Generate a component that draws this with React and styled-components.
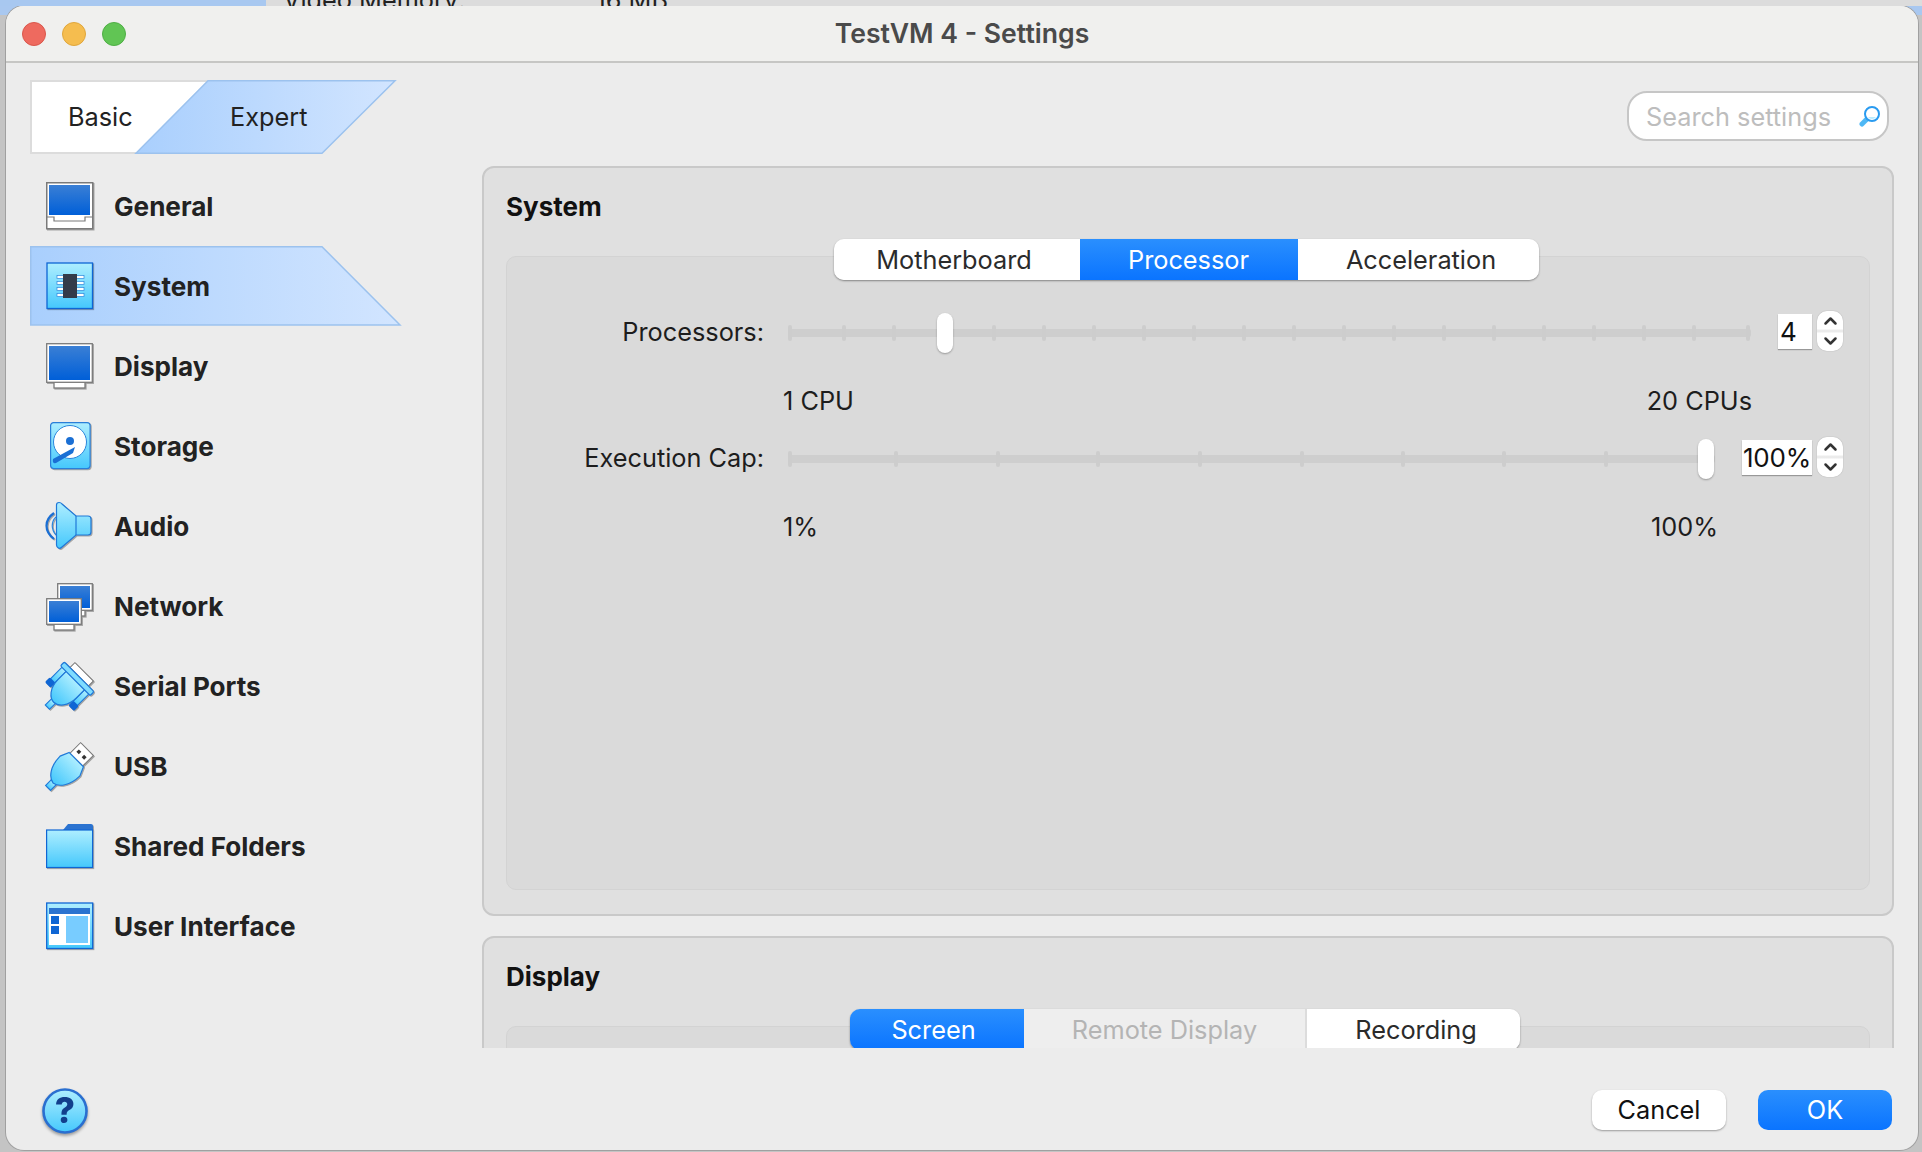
import React from "react";
import styled, { createGlobalStyle } from "styled-components";
import { ChevronUp, ChevronDown } from "lucide-react";

const Global = createGlobalStyle`
  html, body { margin: 0; padding: 0; height: 1152px; overflow: hidden; }
  body { font-family: Inter, "Noto Sans", "Liberation Sans", sans-serif; background: #cfcfcf; }
  * { box-sizing: border-box; }
`;

const Page = styled.div`
  width: 1922px; height: 1152px; overflow: hidden;
  background: linear-gradient(#a9c8f0 0 15px, #c4c4c4 15px);
`;
const Behind = styled.div`
  height: 6px; display: flex; overflow: hidden; margin-left: 0;
`;
const BehindBlue = styled.div`
  width: 266px; background: #a8c8f0;
`;
const BehindSheet = styled.div`
  flex: 1; background: #dcdcdc; display: flex; padding-left: 17px; gap: 130px;
  font-size: 25.3px; line-height: 0; color: #222; white-space: nowrap;
`;
const Win = styled.div`
  width: 1912px; height: 1144px; margin-left: 6px;
  background: #ececec; border-radius: 18px;
  box-shadow: 0 0 0 1px #a0a0a0;
  overflow: hidden; display: flex; flex-direction: column;
`;
const TitleBar = styled.header`
  height: 57px; flex: none; background: #f0f0ee; border-bottom: 2px solid #c6c6c4;
  display: grid; grid-template-columns: 1fr auto 1fr; align-items: center; padding: 0 16px 2px;
`;
const Lights = styled.div` display: flex; gap: 16px; padding-top: 2px; `;
const Light = styled.span`
  width: 24px; height: 24px; border-radius: 50%;
  background: ${p => p.$c}; border: 1px solid ${p => p.$b};
`;
const Title = styled.h1`
  margin: 0; font-size: 26.6px; font-weight: 600; color: #4a4a4a;
`;
const Content = styled.div`
  height: 985px; flex: none; display: flex;
`;
const Side = styled.nav`
  width: 476px; flex: none; padding: 17px 0 0 24px;
`;
const ModeSwitch = styled.div`
  position: relative; width: 366px; height: 74px; display: flex; align-items: center; padding-bottom: 2px;
  font-size: 25.3px; color: #222;
`;
const ShapeBack = styled.svg`
  position: absolute; left: 0; top: 0; overflow: visible;
`;
const ModeLabel = styled.span`
  position: relative; width: ${p => p.$w}px; padding-left: ${p => p.$pad}px;
`;
const NavList = styled.ul`
  list-style: none; margin: 12px 0 0; padding: 0; width: 372px;
`;
const NavRow = styled.li`
  position: relative; height: 80px; display: flex; align-items: center; gap: 20px;
  padding-left: 16px; font-size: 26.1px; font-weight: 700; color: #222;
`;
const IconSvg = styled.svg`
  position: relative; flex: none; width: 48px; height: 48px;
  filter: drop-shadow(1px 1px 0.5px rgba(0,0,0,.3));
  overflow: visible;
`;
const NavText = styled.span` position: relative; `;

const Main = styled.main`
  width: 1412px; flex: none; display: flex; flex-direction: column; padding-top: 28px;
`;
const Search = styled.div`
  align-self: flex-end; margin-right: 5px; width: 262px; height: 50px; flex: none;
  border: 2px solid #c6c6c6; border-radius: 20px; background: #fff;
  display: flex; align-items: center; justify-content: space-between; padding: 0 6px 0 17px;
  font-size: 25.3px; color: #bdbdbd;
`;
const Scroll = styled.div`
  margin-top: 25px; flex: 1; min-height: 0; overflow: hidden;
  display: flex; flex-direction: column; gap: 20px;
`;
const Panel = styled.section`
  flex: none; height: ${p => p.$h}px; background: #e0e0e0; border: 2px solid #c9c9c9; border-radius: 12px;
  padding: 24px 22px 24px 22px; display: flex; flex-direction: column;
`;
const PanelTitle = styled.h2`
  margin: 0; height: 30px; line-height: 30px; font-size: 26px; font-weight: 700; color: #111;
`;
const Inner = styled.div`
  margin-top: ${p => p.$top}px; flex: 1; background: #dadada; border: 1px solid #d3d3d3; border-radius: 10px;
  display: flex; flex-direction: column;
`;
const Tabs = styled.div`
  align-self: center; display: flex; margin-top: -18px; margin-left: ${p => p.$shift || 0}px; height: 41px; flex: none;
  border-radius: 10px; overflow: hidden; box-shadow: 0 1px 2px rgba(0,0,0,.4);
`;
const Tab = styled.div`
  width: ${p => p.$w}px; display: flex; align-items: center; justify-content: center;
  font-size: 25.3px;
  padding-left: ${p => p.$pl || 0}px; padding-right: ${p => p.$pr || 0}px;
  background: ${p => p.$on ? "linear-gradient(#2a8ffe,#0a74ff)" : p.$off ? "#eeeeee" : "#fff"};
  color: ${p => p.$on ? "#fff" : p.$off ? "#b4b4b4" : "#2b2b2b"};
  border-right: ${p => p.$off ? "2px solid #dcdcdc" : "none"};
`;
const Form = styled.div`
  padding: 31px 26px 0 0; display: flex; flex-direction: column;
`;
const SliderRow = styled.div`
  display: grid; grid-template-columns: 257px 1fr auto; column-gap: 19px; align-items: center; height: 44px;
  margin-top: ${p => p.$top || 0}px;
`;
const RowLabel = styled.label`
  text-align: right; font-size: 25.3px; color: #1d1d1d; margin-bottom: 4px;
`;
const Slider = styled.div`
  position: relative; height: 40px; display: flex; align-items: center; padding: 0 5px; margin-right: 3px;
`;
const Track = styled.div`
  flex: 1; height: 8px; background: #cecece; border-radius: 2px;
`;
const Tick = styled.span`
  position: absolute; top: 12px; width: 4px; height: 16px; border-radius: 2px; background: #cdcdcd;
`;
const Thumb = styled.span`
  position: absolute; top: 0; width: 16px; height: 40px; border-radius: 8px; background: #fff;
  box-shadow: 0 1px 2px rgba(0,0,0,.3);
`;
const Spin = styled.div`
  display: flex; align-items: center; gap: 5px; margin-bottom: 4px;
`;
const SpinValue = styled.div`
  width: ${p => p.$w}px; height: 35px; background: #fff; box-shadow: 0 1px 1px rgba(0,0,0,.3);
  font-size: 26px; color: #111; display: flex; align-items: center; justify-content: ${p => p.$w > 50 ? "center" : "flex-start"};
  padding-left: ${p => p.$w > 50 ? 0 : 2}px; letter-spacing: ${p => p.$w > 50 ? "-0.2px" : 0};
`;
const Stepper = styled.div`
  width: 26px; height: 40px; border-radius: 10px; color: #333;
  background: linear-gradient(#fff 0 44%, #e6e6e6 50%, #fff 56%);
  box-shadow: 0 0 1px rgba(0,0,0,.4);
  display: flex; flex-direction: column; align-items: center; justify-content: center;
`;
const Hints = styled.div`
  margin-top: ${p => p.$top}px; height: 30px; line-height: 30px; font-size: 25.3px; color: #1d1d1d;
  display: flex; justify-content: space-between;
  padding-left: 276px; padding-right: ${p => p.$right}px;
`;
const Footer = styled.footer`
  flex: 1; min-height: 0; display: flex; align-items: center; justify-content: space-between;
  padding: 37px 26px 15px 35px;
`;
const HelpIcon = styled.svg`
  width: 48px; height: 48px; margin-top: 2px; flex: none; overflow: visible;
  filter: drop-shadow(0 2px 1.5px rgba(0,0,0,.35));
`;
const Buttons = styled.div` display: flex; gap: 32px; `;
const Btn = styled.button`
  width: 134px; height: 40px; border: 0; border-radius: 10px; padding: 0 0 2px;
  font-family: inherit; font-size: 25.3px;
  background: ${p => p.$primary ? "linear-gradient(#2a8ffe,#0a74ff)" : "#fff"};
  color: ${p => p.$primary ? "#fff" : "#111"};
  box-shadow: ${p => p.$primary ? "none" : "0 1px 2px rgba(0,0,0,.35)"};
`;

const Grad = ({ id }) => (
  <defs>
    <linearGradient id={id} x1="0" y1="0" x2="0" y2="1">
      <stop offset="0" stopColor="#aeeeff" />
      <stop offset="1" stopColor="#45c8fc" />
    </linearGradient>
    <linearGradient id={id + "d"} x1="0" y1="0" x2="0" y2="1">
      <stop offset="0" stopColor="#3a7fd5" />
      <stop offset="1" stopColor="#005fd8" />
    </linearGradient>
  </defs>
);

const Ic = ({ id, children }) => (
  <IconSvg viewBox="0 0 48 48">
    <Grad id={id} />
    {children}
  </IconSvg>
);

const GeneralIcon = () => (
  <Ic id="g1">
    <rect x=".75" y=".75" width="46" height="46" fill="#fff" stroke="#7a7a7a" strokeWidth="1.5" />
    <rect x="3" y="3" width="41" height="30" fill="url(#g1d)" />
    <path d="M1 35H8V39H39V35H47" fill="none" stroke="#7a7a7a" strokeWidth="1.2" />
  </Ic>
);
const SystemIcon = () => (
  <Ic id="g2">
    <rect x="1" y="1" width="45.5" height="45.5" fill="url(#g2)" stroke="#0f66d4" strokeWidth="1.3" />
    {[15, 21, 27, 33].map(y => (
      <rect key={y} x="11" y={y - 1.5} width="27" height="3" fill="#fff" stroke="#2c86dc" strokeWidth=".7" />
    ))}
    <rect x="17" y="12" width="14" height="24" fill="#333b4a" />
  </Ic>
);
const Monitor = ({ x, y, w, h, fill }) => (
  <>
    <rect x={x + 8} y={y + h - 2} width={w - 16} height="7" fill="#fff" stroke="#7a7a7a" strokeWidth="1.3" />
    <rect x={x + .7} y={y + .7} width={w - 1.4} height={h - 1.4} fill="#fff" stroke="#7a7a7a" strokeWidth="1.3" />
    <rect x={x + 3} y={y + 3} width={w - 6} height={h - 6} fill={fill} />
  </>
);
const DisplayIcon = () => (
  <Ic id="g3"><Monitor x={0} y={1} w={47} h={40} fill="url(#g3d)" /></Ic>
);
const StorageIcon = () => (
  <Ic id="g4">
    <rect x="4.6" y=".6" width="39.5" height="46" rx="3" fill="url(#g4)" stroke="#2a7fd8" strokeWidth="1.2" />
    <circle cx="24" cy="20" r="16.5" fill="#fff" stroke="#2a86dc" strokeWidth="1" />
    <circle cx="24" cy="19" r="4" fill="#1a6fd4" />
    <path d="M29 25L27 31L10 41Q6 42 7 37Z" fill="#1a6fd4" />
  </Ic>
);
const AudioIcon = () => (
  <Ic id="g5">
    <path d="M8 11C-2 18-2 29 8 37" fill="none" stroke="#1a6fd4" strokeWidth="2.2" />
    <path d="M10 15C5 20 5 27 10 33" fill="none" stroke="#2a86dc" strokeWidth="1.2" />
    <path d="M10.5 3Q10.5 .5 13 .5Q15 .5 16 2L30 14H42Q45 14 45 17V30Q45 33 42 33H30L16 45Q14 47 12.5 46Q10.5 45 10.5 43Z"
      fill="url(#g5)" stroke="#1f78d8" strokeWidth="1.2" />
    <path d="M30 14V33" stroke="#1f78d8" strokeWidth="1.2" />
  </Ic>
);
const NetworkIcon = () => (
  <Ic id="g6">
    <Monitor x={11} y={1} w={36} h={28} fill="url(#g6d)" />
    <Monitor x={0} y={16} w={36} h={27} fill="url(#g6d)" />
  </Ic>
);
const SerialIcon = () => (
  <Ic id="g7">
    <g transform="translate(24 24) rotate(45)">
      <rect x="-13" y="-20" width="26" height="7" fill="#fff" stroke="#777" strokeWidth="1" />
      <rect x="-4" y="22" width="6" height="9" fill="url(#g7)" stroke="#1f78d8" strokeWidth="1.1" />
      <rect x="-19" y="-8" width="6" height="18" fill="url(#g7)" stroke="#1f78d8" strokeWidth="1.1" />
      <rect x="13" y="-8" width="6" height="18" fill="url(#g7)" stroke="#1f78d8" strokeWidth="1.1" />
      <rect x="-20.5" y="8" width="8" height="7" rx="1.5" fill="#0f66d4" />
      <rect x="12.5" y="8" width="8" height="7" rx="1.5" fill="#0f66d4" />
      <path d="M-13-8H13V4C13 16 6 23 0 23C-6 23-13 16-13 4Z" fill="url(#g7)" stroke="#1f78d8" strokeWidth="1.2" />
      <rect x="-21" y="-13" width="42" height="5.5" rx="1.5" fill="#7fdcff" stroke="#1f78d8" strokeWidth="1.2" />
    </g>
  </Ic>
);
const UsbIcon = () => (
  <Ic id="g8">
    <g transform="translate(24 24) rotate(45)">
      <rect x="-9" y="-24" width="18" height="15" fill="#fff" stroke="#777" strokeWidth="1" />
      <rect x="-5.5" y="-18" width="3.5" height="3.5" fill="#333" />
      <rect x="2" y="-18" width="3.5" height="3.5" fill="#333" />
      <rect x="-3.5" y="22" width="7" height="9" fill="url(#g8)" stroke="#1f78d8" strokeWidth="1.1" />
      <path d="M-10-9H10L14 0C14 14 7 23 0 24C-7 23-14 14-14 0Z" fill="url(#g8)" stroke="#1f78d8" strokeWidth="1.2" />
    </g>
  </Ic>
);
const FolderIcon = () => (
  <Ic id="g9">
    <path d="M17 8L22 2H45Q47 2 47 4V10H17Z" fill="#2b73d0" />
    <rect x=".6" y="8" width="46" height="37.5" fill="url(#g9)" stroke="#0f66d4" strokeWidth="1.2" />
  </Ic>
);
const UiIcon = () => (
  <Ic id="g10">
    <rect x=".7" y="1" width="46" height="45.5" fill="url(#g10)" stroke="#0f66d4" strokeWidth="1.3" />
    <rect x="3" y="6" width="41" height="37" fill="#fff" />
    <rect x="3" y="6" width="41" height="6" fill="#2b73d0" />
    <rect x="5" y="14" width="8" height="8" fill="#0f66d4" />
    <rect x="5" y="24" width="8" height="8" fill="#0f66d4" />
    <rect x="20" y="14" width="22" height="27" fill="#78ccff" />
  </Ic>
);

const NAV = [
  ["General", GeneralIcon],
  ["System", SystemIcon],
  ["Display", DisplayIcon],
  ["Storage", StorageIcon],
  ["Audio", AudioIcon],
  ["Network", NetworkIcon],
  ["Serial Ports", SerialIcon],
  ["USB", UsbIcon],
  ["Shared Folders", FolderIcon],
  ["User Interface", UiIcon],
];

const PROC_TICKS = [788, 842, 892, 992, 1042, 1092, 1142, 1192, 1242, 1292, 1342, 1392, 1442, 1492, 1542, 1592, 1642, 1692, 1746];
const CAP_TICKS = [788, 894, 996, 1096, 1198, 1300, 1401, 1502, 1604];
const SLIDER_X = 783;

const SliderCtl = ({ ticks, thumb }) => (
  <Slider>
    <Track />
    {ticks.map(t => <Tick key={t} style={{ left: t - SLIDER_X }} />)}
    <Thumb style={{ left: thumb - SLIDER_X }} />
  </Slider>
);
const Spinner = ({ value, w }) => (
  <Spin>
    <SpinValue $w={w}>{value}</SpinValue>
    <Stepper>
      <ChevronUp size={21} strokeWidth={3} />
      <ChevronDown size={21} strokeWidth={3} />
    </Stepper>
  </Spin>
);

export default function App() {
  return (
    <Page>
      <Global />
      <Behind>
        <BehindBlue />
        <BehindSheet><span>Video Memory:</span><span>16 MB</span></BehindSheet>
      </Behind>
      <Win>
        <TitleBar>
          <Lights>
            <Light $c="#ee6a5f" $b="#d9574c" />
            <Light $c="#f5bd4f" $b="#dfa63c" />
            <Light $c="#61c554" $b="#4fae45" />
          </Lights>
          <Title>TestVM 4 - Settings</Title>
          <span />
        </TitleBar>
        <Content>
          <Side>
            <ModeSwitch>
              <ShapeBack width="366" height="74" viewBox="0 0 366 74">
                <defs>
                  <linearGradient id="blue" x1="0" y1="0" x2="1" y2="0">
                    <stop offset="0" stopColor="#a9cffd" />
                    <stop offset="1" stopColor="#d2e5ff" />
                  </linearGradient>
                </defs>
                <path d="M1 1H180L108 73H1Z" fill="#fff" stroke="#dcdcdc" strokeWidth="2" />
                <path d="M178 .75H365L292 73.25H106Z" fill="url(#blue)" stroke="#9cc2ee" strokeWidth="1.5" />
              </ShapeBack>
              <ModeLabel $w={162} $pad={38}>Basic</ModeLabel>
              <ModeLabel $w={200} $pad={38}>Expert</ModeLabel>
            </ModeSwitch>
            <NavList>
              {NAV.map(([name, Icon]) => (
                <NavRow key={name}>
                  {name === "System" && (
                    <ShapeBack width="372" height="80" viewBox="0 0 372 80">
                      <path d="M.75 .75H292L370 79H.75Z" fill="url(#blue)" stroke="#9cc2ee" strokeWidth="1.5" />
                    </ShapeBack>
                  )}
                  <Icon />
                  <NavText>{name}</NavText>
                </NavRow>
              ))}
            </NavList>
          </Side>
          <Main>
            <Search>
              <span>Search settings</span>
              <svg width="22" height="22" viewBox="0 0 22 22">
                <path d="M7 15L3 19" stroke="#4fb8f5" strokeWidth="5" strokeLinecap="round" />
                <circle cx="13" cy="9" r="7" fill="#fff" stroke="#2a9bf0" strokeWidth="2" />
                <path d="M9 12A5 5 0 0 0 17 12" fill="#b8ecff" />
              </svg>
            </Search>
            <Scroll>
              <Panel $h={750}>
                <PanelTitle>System</PanelTitle>
                <Inner $top={34}>
                  <Tabs $shift={-4}>
                    <Tab $w={246} $pr={5}>Motherboard</Tab>
                    <Tab $w={218} $on>Processor</Tab>
                    <Tab $w={241} $pl={6}>Acceleration</Tab>
                  </Tabs>
                  <Form>
                    <SliderRow>
                      <RowLabel>Processors:</RowLabel>
                      <SliderCtl ticks={PROC_TICKS} thumb={937} />
                      <Spinner value="4" w={34} />
                    </SliderRow>
                    <Hints $top={31} $right={91}><span>1 CPU</span><span>20 CPUs</span></Hints>
                    <SliderRow $top={21}>
                      <RowLabel>Execution Cap:</RowLabel>
                      <SliderCtl ticks={CAP_TICKS} thumb={1698} />
                      <Spinner value="100%" w={70} />
                    </SliderRow>
                    <Hints $top={31} $right={125}><span>1%</span><span>100%</span></Hints>
                  </Form>
                </Inner>
              </Panel>
              <Panel $h={400}>
                <PanelTitle>Display</PanelTitle>
                <Inner $top={34}>
                  <Tabs $shift={-6}>
                    <Tab $w={174} $on $pr={7}>Screen</Tab>
                    <Tab $w={283} $off>Remote Display</Tab>
                    <Tab $w={213} $pl={5}>Recording</Tab>
                  </Tabs>
                </Inner>
              </Panel>
            </Scroll>
          </Main>
        </Content>
        <Footer>
          <HelpIcon viewBox="0 0 48 48">
            <Grad id="help" />
            <circle cx="24" cy="24" r="21.5" fill="url(#help)" stroke="#2a6fd0" strokeWidth="2.6" />
            <text x="24" y="36" textAnchor="middle" fontSize="35" fontWeight="800" fontFamily="Inter, sans-serif" fill="#123f8c">?</text>
          </HelpIcon>
          <Buttons>
            <Btn>Cancel</Btn>
            <Btn $primary>OK</Btn>
          </Buttons>
        </Footer>
      </Win>
    </Page>
  );
}
